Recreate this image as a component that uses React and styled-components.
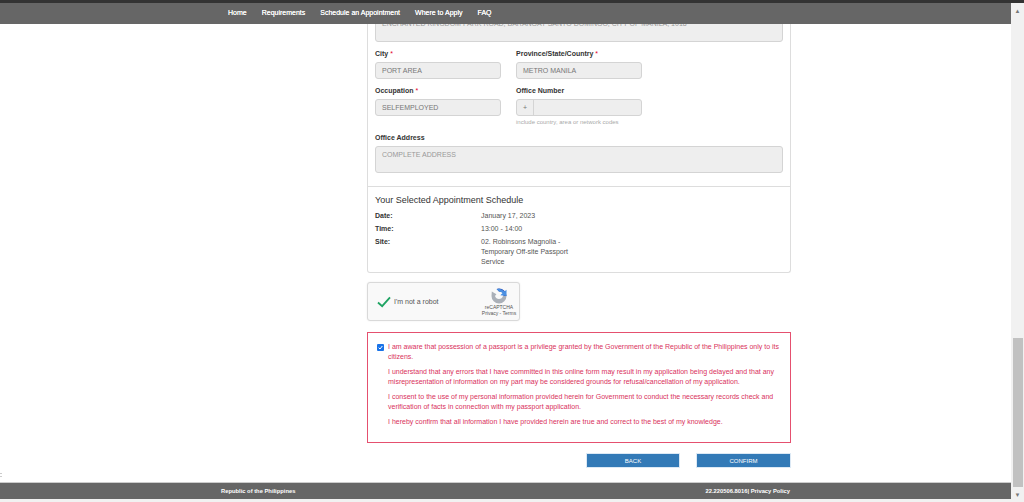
import React from "react";
import styled, { createGlobalStyle } from "styled-components";

const GlobalStyle = createGlobalStyle`
  html, body {
    margin: 0;
    padding: 0;
    height: 502px;
    overflow: hidden;
    background: #fff;
    font-family: "Liberation Sans", Arial, sans-serif;
  }
`;

const Shell = styled.div`
  height: 502px;
  display: flex;
  flex-direction: column;
  background: #f1f1f1;
  border-top: 3px solid #333;
  box-sizing: border-box;
`;

const Window = styled.div`
  display: flex;
  align-items: flex-start;
  height: 499px;
`;

const Viewport = styled.div`
  position: relative;
  width: 1011px;
  height: 496px;
  display: flex;
  flex-direction: column;
  background: #fff;
  overflow: hidden;
`;

const TopBar = styled.header`
  position: absolute;
  top: 0;
  left: 0;
  right: 0;
  height: 21px;
  box-sizing: border-box;
  padding: 0 0 2px 228px;
  background: #666;
  display: flex;
  align-items: center;
  gap: 15px;
  z-index: 2;
`;

const NavLink = styled.a`
  color: #fff;
  font-size: 7px;
  white-space: nowrap;
  text-shadow: 0 0 0.6px #fff;
`;

const Content = styled.main`
  flex: 1;
  display: flex;
  flex-direction: column;
  align-items: flex-start;
  padding-left: 367px;
`;

const Card = styled.section`
  width: 424px;
  height: 270px;
  box-sizing: border-box;
  border: 1px solid #ddd;
  border-top: 0;
  border-radius: 0 0 3px 3px;
`;

const FormPart = styled.div`
  height: 184px;
  box-sizing: border-box;
  padding: 0 7px;
  border-bottom: 1px solid #ddd;
`;

const Area = styled.div`
  width: 408px;
  height: ${(p) => p.$h}px;
  box-sizing: border-box;
  background: #eee;
  border: 1px solid #d4d4d4;
  border-radius: 3px;
  color: #999;
  font-size: 7px;
  padding: ${(p) => p.$pad}px 6px 0;
  white-space: nowrap;
  overflow: hidden;
`;

const Row = styled.div`
  display: grid;
  grid-template-columns: 126px 126px;
  column-gap: 15px;
  margin-top: 7px;
`;

const Label = styled.label`
  display: block;
  color: #333;
  font-size: 7px;
  font-weight: bold;
  line-height: 10px;
  margin-bottom: 3px;
  margin-top: ${(p) => p.$top || 0}px;
`;

const Req = styled.span`
  color: #e4002b;
  font-weight: normal;
`;

const Input = styled.div`
  height: 17px;
  box-sizing: border-box;
  background: #eee;
  border: 1px solid #d4d4d4;
  border-radius: 3px;
  color: #777;
  font-size: 7px;
  line-height: 15px;
  padding-left: 6px;
  display: flex;
`;

const Prefix = styled.span`
  width: 17px;
  margin-left: -6px;
  padding-left: 6px;
  box-sizing: border-box;
  border-right: 1px solid #d4d4d4;
`;

const Hint = styled.div`
  color: #aaa;
  font-size: 6px;
  line-height: 8px;
  margin-top: 2px;
`;

const Schedule = styled.div`
  padding: 7px 7px 0;
`;

const ScheduleTitle = styled.h3`
  margin: 0 0 4px;
  color: #333;
  font-size: 9px;
  font-weight: normal;
  line-height: 13px;
`;

const ScheduleRow = styled.div`
  display: grid;
  grid-template-columns: 106px 100px;
  font-size: 7px;
  line-height: 10px;
  color: #555;
  margin-bottom: 3px;
`;

const ScheduleKey = styled.span`
  color: #333;
  font-weight: bold;
`;

const Captcha = styled.div`
  width: 153px;
  height: 39px;
  box-sizing: border-box;
  margin-top: 9px;
  background: #f9f9f9;
  border: 1px solid #d9d9d9;
  border-radius: 3px;
  display: flex;
  align-items: center;
  padding-left: 9px;
  box-shadow: 0 0 2px rgba(0, 0, 0, 0.08);
`;

const CaptchaLabel = styled.span`
  flex: 1;
  margin-left: 3px;
  font-size: 7px;
  color: #555;
`;

const CaptchaBrand = styled.div`
  width: 32px;
  margin-right: 4px;
  display: flex;
  flex-direction: column;
  align-items: center;
  color: #555;
  font-size: 5px;
  line-height: 6px;
  white-space: nowrap;
`;

const Terms = styled.div`
  width: 424px;
  height: 111px;
  box-sizing: border-box;
  margin-top: 11px;
  border: 1px solid #e5506f;
  padding: 9px 8px 0 9px;
  display: flex;
  gap: 4px;
  color: #d9315c;
  font-size: 7px;
  line-height: 10px;
`;

const Check = styled.span`
  flex: none;
  width: 7px;
  height: 7px;
  margin-top: 2px;
  border-radius: 1px;
  background: #1a73e8;
  display: flex;
  align-items: center;
  justify-content: center;
`;

const Para = styled.p`
  margin: 0 0 5px;
`;

const Actions = styled.div`
  width: 424px;
  display: flex;
  justify-content: flex-end;
  gap: 16px;
  margin-top: 10px;
`;

const Button = styled.button`
  width: ${(p) => p.$w}px;
  height: 15px;
  padding: 0;
  border: 1px solid #dce9f5;
  background: #337ab7;
  color: #fff;
  font-family: inherit;
  font-size: 6px;
`;

const Footer = styled.footer`
  height: 17px;
  flex: none;
  box-sizing: border-box;
  border-top: 1px solid #ccc;
  background: #666;
  color: #fff;
  font-size: 5.8px;
  font-weight: bold;
  display: flex;
  align-items: center;
  justify-content: space-between;
  padding: 0 221px;
`;

const EdgeMark = styled.span`
  position: absolute;
  left: 0;
  bottom: 22px;
  width: 2px;
  height: 2px;
  border-top: 1px solid #ccc;
  border-bottom: 1px solid #ccc;
`;

const Scrollbar = styled.div`
  flex: 1;
  height: 499px;
  display: flex;
  flex-direction: column;
  align-items: center;
  background: #f1f1f1;
`;

const Arrow = styled.span`
  height: 15px;
  display: flex;
  align-items: center;
  justify-content: center;
  color: #777;
  font-size: 6px;
`;

const Thumb = styled.div`
  width: 10px;
  height: 149px;
  margin-top: auto;
  background: #c1c1c1;
`;

const navItems = ["Home", "Requirements", "Schedule an Appointment", "Where to Apply", "FAQ"];

export default function App() {
  return (
    <Shell>
      <GlobalStyle />
      <Window>
        <Viewport>
          <TopBar>
            {navItems.map((t) => (
              <NavLink key={t}>{t}</NavLink>
            ))}
          </TopBar>
          <Content>
            <Card>
              <FormPart>
                <Area $h={39} $pad={16}>ENCHANTED KINGDOM PARK ROAD, BARANGAY SANTO DOMINGO, CITY OF MANILA, 1018</Area>
                <Row>
                  <div>
                    <Label>City <Req>*</Req></Label>
                    <Input>PORT AREA</Input>
                  </div>
                  <div>
                    <Label>Province/State/Country <Req>*</Req></Label>
                    <Input>METRO MANILA</Input>
                  </div>
                </Row>
                <Row>
                  <div>
                    <Label>Occupation <Req>*</Req></Label>
                    <Input>SELFEMPLOYED</Input>
                  </div>
                  <div>
                    <Label>Office Number</Label>
                    <Input><Prefix>+</Prefix></Input>
                    <Hint>include country, area or network codes</Hint>
                  </div>
                </Row>
                <Label $top={7}>Office Address</Label>
                <Area $h={27} $pad={4}>COMPLETE ADDRESS</Area>
              </FormPart>
              <Schedule>
                <ScheduleTitle>Your Selected Appointment Schedule</ScheduleTitle>
                <ScheduleRow><ScheduleKey>Date:</ScheduleKey><span>January 17, 2023</span></ScheduleRow>
                <ScheduleRow><ScheduleKey>Time:</ScheduleKey><span>13:00 - 14:00</span></ScheduleRow>
                <ScheduleRow><ScheduleKey>Site:</ScheduleKey><span>02. Robinsons Magnolia - Temporary Off-site Passport Service</span></ScheduleRow>
              </Schedule>
            </Card>
            <Captcha>
              <svg width="14" height="12" viewBox="0 0 15 13">
                <path d="M1 7 L5.5 11 L14 1.5" fill="none" stroke="#1fa463" strokeWidth="2" />
              </svg>
              <CaptchaLabel>I'm not a robot</CaptchaLabel>
              <CaptchaBrand>
                <svg width="16" height="16" viewBox="0 0 16 16">
                  <path d="M8 0.5 A7.5 7.5 0 0 1 15.5 8 L12 8 L13.2 6.8 A5.5 5.5 0 0 0 8 3.4 L5.6 1 A7.5 7.5 0 0 1 8 0.5 Z" fill="#1c3aa9" />
                  <path d="M5.6 1 L8 3.4 A5 5 0 0 1 11.6 5 L9.4 7.2 L15.5 8 L15.5 1.8 L13.4 3.4 A7.5 7.5 0 0 0 5.6 1 Z" fill="#4a90e2" />
                  <path d="M0.5 8 A7.5 7.5 0 0 0 15.5 8 L12 8 A4.2 4.2 0 0 1 4 8 L5.4 6.2 L0.8 3.6 Z" fill="#aab0b8" />
                </svg>
                <span>reCAPTCHA</span>
                <span>Privacy - Terms</span>
              </CaptchaBrand>
            </Captcha>
            <Terms>
              <Check>
                <svg width="5" height="5" viewBox="0 0 6 6">
                  <path d="M0.8 3.2 L2.4 4.8 L5.2 1.2" fill="none" stroke="#fff" strokeWidth="1.2" />
                </svg>
              </Check>
              <div>
                <Para>I am aware that possession of a passport is a privilege granted by the Government of the Republic of the Philippines only to its citizens.</Para>
                <Para>I understand that any errors that I have committed in this online form may result in my application being delayed and that any misrepresentation of information on my part may be considered grounds for refusal/cancellation of my application.</Para>
                <Para>I consent to the use of my personal information provided herein for Government to conduct the necessary records check and verification of facts in connection with my passport application.</Para>
                <Para>I hereby confirm that all information I have provided herein are true and correct to the best of my knowledge.</Para>
              </div>
            </Terms>
            <Actions>
              <Button $w={94}>BACK</Button>
              <Button $w={95}>CONFIRM</Button>
            </Actions>
          </Content>
          <Footer>
            <span>Republic of the Philippines</span>
            <span>22.220506.8016| Privacy Policy</span>
          </Footer>
          <EdgeMark />
        </Viewport>
        <Scrollbar>
          <Arrow>▲</Arrow>
          <Thumb />
          <Arrow>▼</Arrow>
        </Scrollbar>
      </Window>
    </Shell>
  );
}
